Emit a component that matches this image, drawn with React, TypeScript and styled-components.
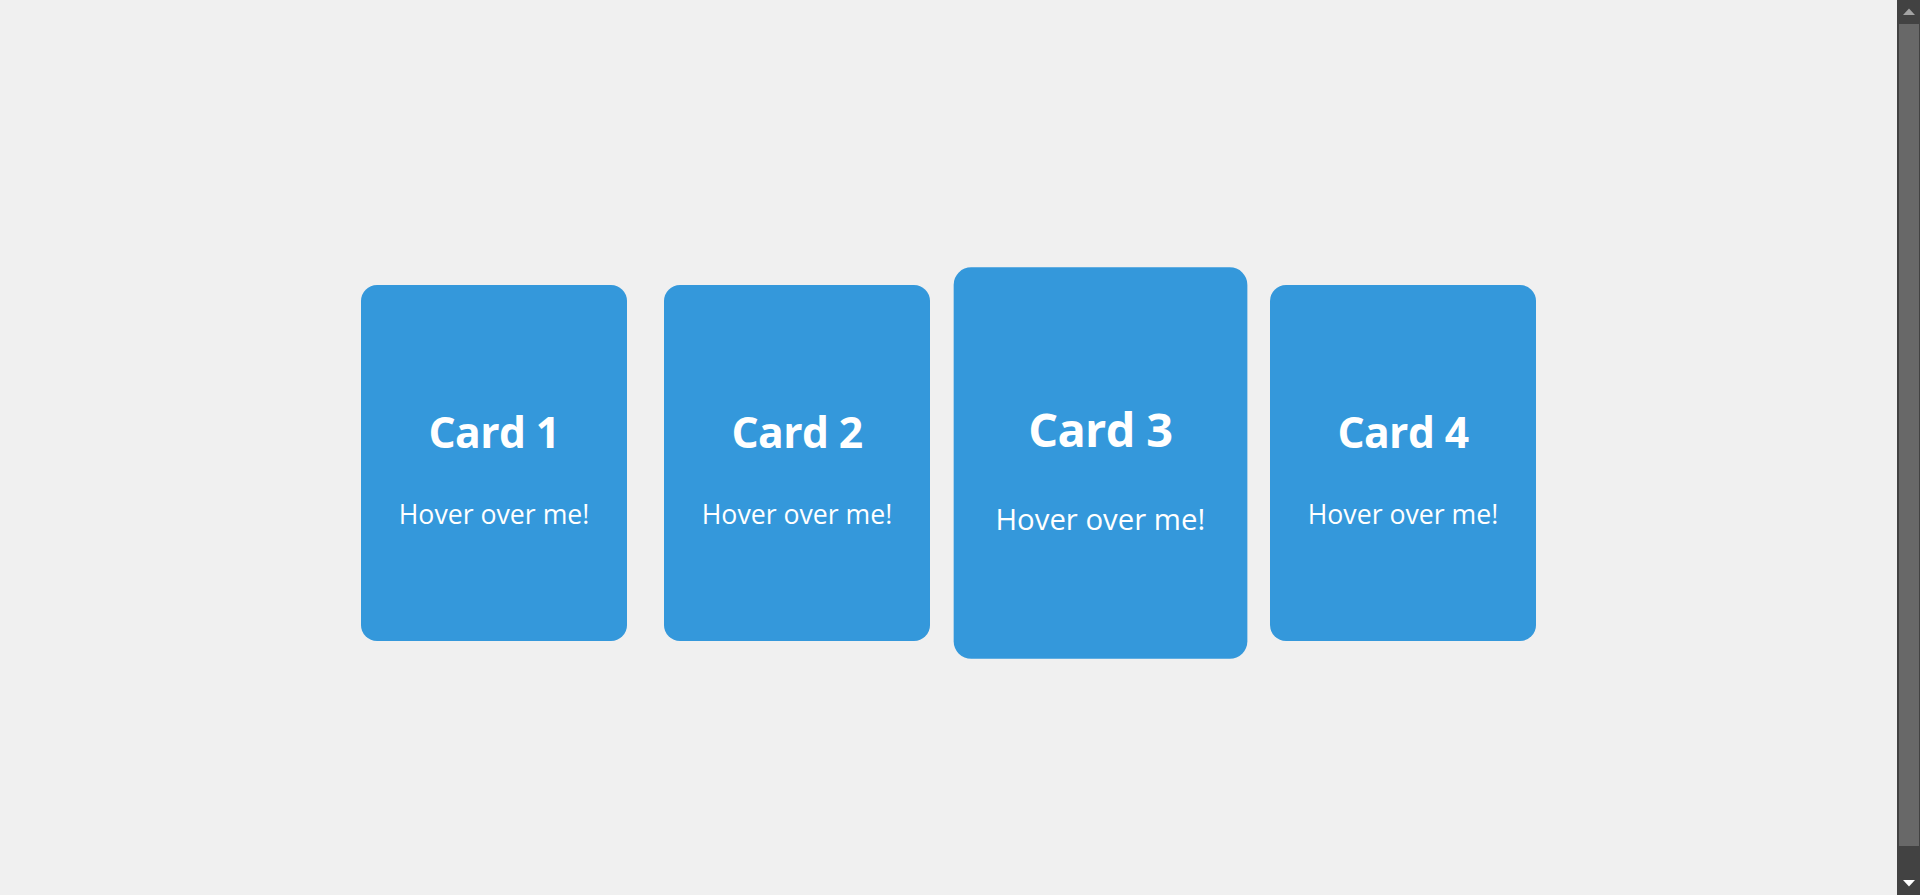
import React from "react";
import styled, { createGlobalStyle } from "styled-components";

const GlobalStyle = createGlobalStyle`
  html, body {
    margin: 0;
    padding: 0;
    overflow: hidden;
  }

  body {
    background-color: #f0f0f0;
    font-family: "Open Sans", "Noto Sans", sans-serif;
  }
`;

const cards = [
  { id: 1, title: "Card 1", hovered: false },
  { id: 2, title: "Card 2", hovered: false },
  { id: 3, title: "Card 3", hovered: true },
  { id: 4, title: "Card 4", hovered: false },
];

function App() {
  return (
    <>
      <GlobalStyle />
      <Page>
        <Main>
          <CardRow>
            {cards.map((card) => (
              <Card key={card.id} $hovered={card.hovered}>
                <Title>{card.title}</Title>
                <Text>Hover over me!</Text>
              </Card>
            ))}
          </CardRow>
        </Main>
        <ScrollRail>
          <ScrollButton>
            <svg width="12" height="7" viewBox="0 0 12 7">
              <path d="M0 7 L6 0.5 L12 7 Z" fill="#a3a3a3" />
            </svg>
          </ScrollButton>
          <ScrollTrack>
            <ScrollThumb />
          </ScrollTrack>
          <ScrollButton>
            <svg width="12" height="7" viewBox="0 0 12 7">
              <path d="M0 0 L12 0 L6 6.5 Z" fill="#ffffff" />
            </svg>
          </ScrollButton>
        </ScrollRail>
      </Page>
    </>
  );
}

const Page = styled.div`
  display: flex;
  height: 100vh;
`;

const Main = styled.main`
  display: flex;
  flex: 1;
  box-sizing: border-box;
  padding-top: 31px;
  justify-content: center;
  align-items: center;
`;

const CardRow = styled.div`
  display: flex;
  gap: 36.3px;
  align-items: center;
`;

const Card = styled.div<{ $hovered: boolean }>`
  display: flex;
  flex-direction: column;
  justify-content: center;
  align-items: center;
  box-sizing: border-box;
  width: 266.7px;
  height: 355.6px;
  padding-top: 13px;
  border-radius: 16px;
  background-color: #3498db;
  color: #ffffff;
  text-align: center;
  transform: ${(p) => (p.$hovered ? "scale(1.1)" : "none")};
  transition: transform 0.3s ease;
`;

const Title = styled.h2`
  margin: 0 0 47px;
  font-size: 42.67px;
  font-weight: 700;
  line-height: 1;
  letter-spacing: -0.6px;
`;

const Text = styled.p`
  margin: 0;
  font-size: 26.67px;
  font-weight: 400;
  line-height: 1;
`;

const ScrollRail = styled.div`
  display: flex;
  flex-direction: column;
  width: 23px;
  flex-shrink: 0;
  background-color: #424242;
`;

const ScrollButton = styled.div`
  display: flex;
  height: 23px;
  flex-shrink: 0;
  justify-content: center;
  align-items: center;
  padding-left: 1px;
`;

const ScrollTrack = styled.div`
  flex: 1;
  padding: 1px 1px 0 2px;
`;

const ScrollThumb = styled.div`
  height: 822px;
  background-color: #686868;
`;

export default App;
